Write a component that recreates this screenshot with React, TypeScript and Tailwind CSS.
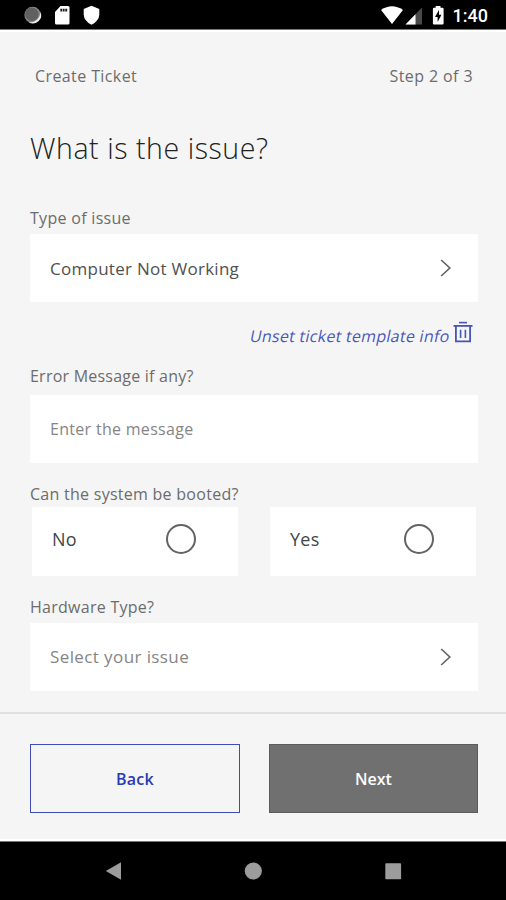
import { useState } from "react";

function ChevronRight() {
  return (
    <svg className="h-[18px] w-3" viewBox="0 0 12 18" fill="none">
      <path d="M1.2 1L9.8 9L1.2 17" stroke="#666666" strokeWidth="1.7" />
    </svg>
  );
}

function TrashIcon() {
  return (
    <svg className="h-[22px] w-5" viewBox="0 0 20 22" fill="none" stroke="#4655b8">
      <path d="M6 1.6H14" strokeWidth="1.6" />
      <path d="M0.5 4.9H19.5" strokeWidth="1.8" />
      <path d="M2.9 5V20.4H17.1V5" strokeWidth="1.8" />
      <path d="M7.6 8.8V17M12.4 8.8V17" strokeWidth="1.6" />
    </svg>
  );
}

function StatusBar() {
  return (
    <div className="flex h-[30px] shrink-0 justify-between border-b border-[#777777] bg-black">
      <svg className="h-[29px] w-[110px]" viewBox="0 0 110 29">
        <circle cx="32.6" cy="15" r="8.2" fill="#8a8a8a" />
        <path d="M40.3 11.5A8.3 8.3 0 0 1 28.5 22.2A10 10 0 0 0 40.3 11.5Z" fill="#eeeeee" />
        <circle cx="31.8" cy="14.2" r="6.8" fill="#606060" />
        <path d="M60.5 6H68Q69.5 6 69.5 7.5V23Q69.5 24.5 68 24.5H56.5Q55 24.5 55 23V12Z" fill="#fff" />
        <path d="M60.3 8.8H62.3V11.4H60.3ZM62.9 8.8H64.6V11.4H62.9ZM65.2 8.8H67.2V11.4H65.2Z" fill="#222" />
        <path d="M91.5 5.8L99.3 9V14.5Q99 21 91.5 24.8Q84 21 83.7 14.5V9Z" fill="#fff" />
      </svg>
      <div className="flex">
        <svg className="h-[29px] w-[66px]" viewBox="380 0 66 29">
          <path d="M381 10Q392 2.5 403 10L392 24Z" fill="#fff" />
          <path d="M422 7.5V24.5H405.5Z" fill="#4a4a4a" />
          <path d="M415.5 14.2V24.5H405.5Z" fill="#fff" />
          <path d="M435.7 6H440.5V7.8H442.5Q443.6 7.8 443.6 9V23.4Q443.6 24.5 442.5 24.5H434Q432.9 24.5 432.9 23.4V9Q432.9 7.8 434 7.8H435.7Z" fill="#fff" />
          <path d="M439 10L435 17H437.6V22L441.5 14.8H439Z" fill="#000" />
        </svg>
        <span className="w-[60px] pl-[6.5px] pt-[1px] font-[Roboto] text-[18px] leading-[30px] font-medium tracking-normal text-white">
          1:40
        </span>
      </div>
    </div>
  );
}

function NavBar() {
  return (
    <div className="h-[59px] shrink-0 border-t border-[#777777] bg-black">
      <svg className="h-[58px] w-[506px]" viewBox="0 842 506 58" fill="#9c9c9c">
        <path d="M105.8 871L121 862.2V879.8Z" />
        <circle cx="253.3" cy="871" r="8.6" />
        <rect x="385.3" y="863.2" width="15.8" height="16" rx="0.8" />
      </svg>
    </div>
  );
}

export default function App() {
  const [message, setMessage] = useState("");
  const [bootable, setBootable] = useState("");

  return (
    <div className="flex h-[900px] w-[506px] flex-col overflow-hidden bg-[#f5f5f5] font-['Open_Sans',sans-serif] text-[16px] tracking-[0.27px] text-[#6c6c6c]">
      <StatusBar />
      <div className="flex h-[682px] shrink-0 flex-col border-t-2 border-white pr-7 pl-[30px]">
        <div className="flex h-[88px] items-center justify-between pr-[5px] pl-[5px]">
          <span className="tracking-[0.4px]">Create Ticket</span>
          <span className="tracking-[0.4px]">Step 2 of 3</span>
        </div>
        <h1 className="h-[84px] pt-[8px] text-[28.5px] leading-[40px] font-light tracking-[0.57px] text-[#222222]">
          What is the issue?
        </h1>
        <label className="h-[30px] leading-[28px] tracking-[0.3px]">Type of issue</label>
        <button className="flex h-[68px] items-center justify-between bg-white pr-[26px] pl-5 text-[17px] text-[#505050]">
          <span className="pt-[1px]">Computer Not Working</span>
          <ChevronRight />
        </button>
        <div className="flex h-[60px] items-center justify-end gap-[2px] pr-[5px]">
          <span className="-skew-x-12 pt-[7px] text-[#4a58bd]">Unset ticket template info</span>
          <TrashIcon />
        </div>
        <label className="h-[33px] leading-[28px] tracking-[0.23px]">Error Message if any?</label>
        <input
          className="h-[68px] bg-white px-5 tracking-[0.3px] placeholder:text-[#858585] focus:outline-none"
          placeholder="Enter the message"
          value={message}
          onChange={(e) => setMessage(e.target.value)}
        />
        <label className="h-[44px] pt-[17px] leading-[28px]">Can the system be booted?</label>
        <div className="flex h-[69px] shrink-0 justify-between px-[2px] text-[18px] text-[#444444]">
          {["No", "Yes"].map((option) => (
            <button
              key={option}
              className="flex w-[206px] items-center justify-between bg-white pr-[42px] pb-[5px] pl-5"
              onClick={() => setBootable(option)}
            >
              <span>{option}</span>
              <span className="flex h-[30px] w-[30px] items-center justify-center rounded-full border-2 border-[#636363]">
                {bootable === option && <span className="h-4 w-4 rounded-full bg-[#636363]" />}
              </span>
            </button>
          ))}
        </div>
        <label className="h-[47px] pt-[17px] leading-[28px]">Hardware Type?</label>
        <button className="flex h-[68px] items-center justify-between bg-white pr-[26px] pl-5 text-[17px] tracking-[0.4px] text-[#858585]">
          <span>Select your issue</span>
          <ChevronRight />
        </button>
      </div>
      <div className="flex h-[129px] shrink-0 justify-between border-t-2 border-b-2 border-t-[#e0e0e0] border-b-white pt-[30px] pr-7 pl-[30px]">
        <button className="h-[69px] w-[210px] border border-[#3f4cb5] font-semibold text-[#2b3ab3]">
          Back
        </button>
        <button className="h-[69px] w-[209px] border border-[#5c5c5c] bg-[#707070] font-semibold tracking-normal text-white">
          Next
        </button>
      </div>
      <NavBar />
    </div>
  );
}
